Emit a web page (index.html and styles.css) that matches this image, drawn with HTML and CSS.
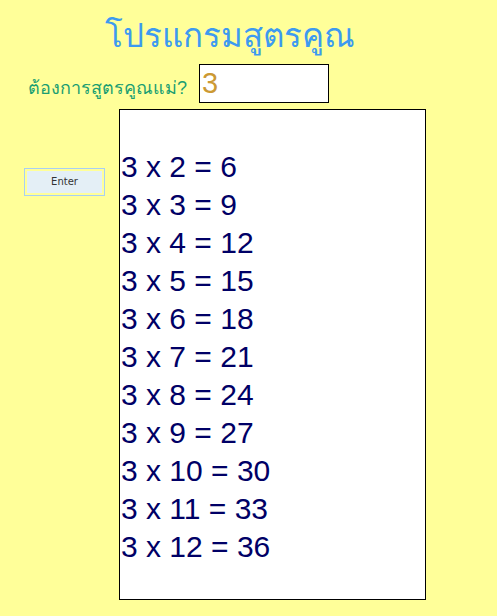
FILE: index.html
```html
<!DOCTYPE html>
<html lang="th">
<head>
<meta charset="utf-8">
<title>โปรแกรมสูตรคูณ</title>
<link rel="stylesheet" href="styles.css">
</head>
<body>
<div class="page">
  <h1 class="title">โปรแกรมสูตรคูณ</h1>
  <div class="ask-row">
    <label class="ask-label" for="mom">ต้องการสูตรคูณแม่?</label>
    <div class="ask-input" id="mom">3</div>
  </div>
  <div class="main-row">
    <div class="side">
      <button class="enter-btn" type="button"><span class="enter-face">Enter</span></button>
    </div>
    <div class="result">
      <div class="line">&nbsp;</div>
      <div class="line">3 x 2 = 6</div>
      <div class="line">3 x 3 = 9</div>
      <div class="line">3 x 4 = 12</div>
      <div class="line">3 x 5 = 15</div>
      <div class="line">3 x 6 = 18</div>
      <div class="line">3 x 7 = 21</div>
      <div class="line">3 x 8 = 24</div>
      <div class="line">3 x 9 = 27</div>
      <div class="line">3 x 10 = 30</div>
      <div class="line">3 x 11 = 33</div>
      <div class="line">3 x 12 = 36</div>
    </div>
  </div>
</div>
</body>
</html>
```

FILE: styles.css
```css
html, body {
  margin: 0;
  padding: 0;
  background: #ffff99;
}
body {
  font-family: "Liberation Sans", Arial, sans-serif;
  width: 497px;
  height: 616px;
  overflow: hidden;
}
.page {
  padding-top: 8px;
}
.title {
  margin: 0 0 0 105px;
  font-size: 33px;
  font-weight: normal;
  line-height: 56px;
  height: 52px;
  color: #3d9af0;
  white-space: nowrap;
}
.ask-row {
  display: flex;
  align-items: center;
  height: 39px;
  margin-top: 4px;
}
.ask-label {
  margin-left: 28px;
  width: 171px;
  font-size: 18px;
  color: #1a9e72;
  white-space: nowrap;
  padding-top: 8px;
}
.ask-input {
  box-sizing: border-box;
  width: 130px;
  height: 39px;
  border: 1px solid #000;
  background: #fff;
  color: #cc9933;
  font-size: 29px;
  line-height: 36px;
  padding-left: 2px;
}
.main-row {
  display: flex;
  margin-top: 6px;
}
.side {
  width: 119px;
  padding-left: 24px;
  box-sizing: border-box;
  padding-top: 59px;
}
.enter-btn {
  display: block;
  box-sizing: border-box;
  width: 81px;
  height: 28px;
  padding: 2px;
  border: 1px solid #a8cff5;
  background: #ffff99;
  cursor: pointer;
}
.enter-face {
  display: block;
  height: 100%;
  background: #e4eff6;
  color: #333;
  font-family: "DejaVu Sans", sans-serif;
  font-size: 10px;
  line-height: 22px;
  text-align: center;
}
.result {
  box-sizing: border-box;
  width: 307px;
  height: 491px;
  border: 1px solid #000;
  background: #fff;
  padding: 0 0 0 1px;
  color: #000066;
  font-size: 30px;
  line-height: 38px;
}
.line {
  height: 38px;
  white-space: nowrap;
}
```
